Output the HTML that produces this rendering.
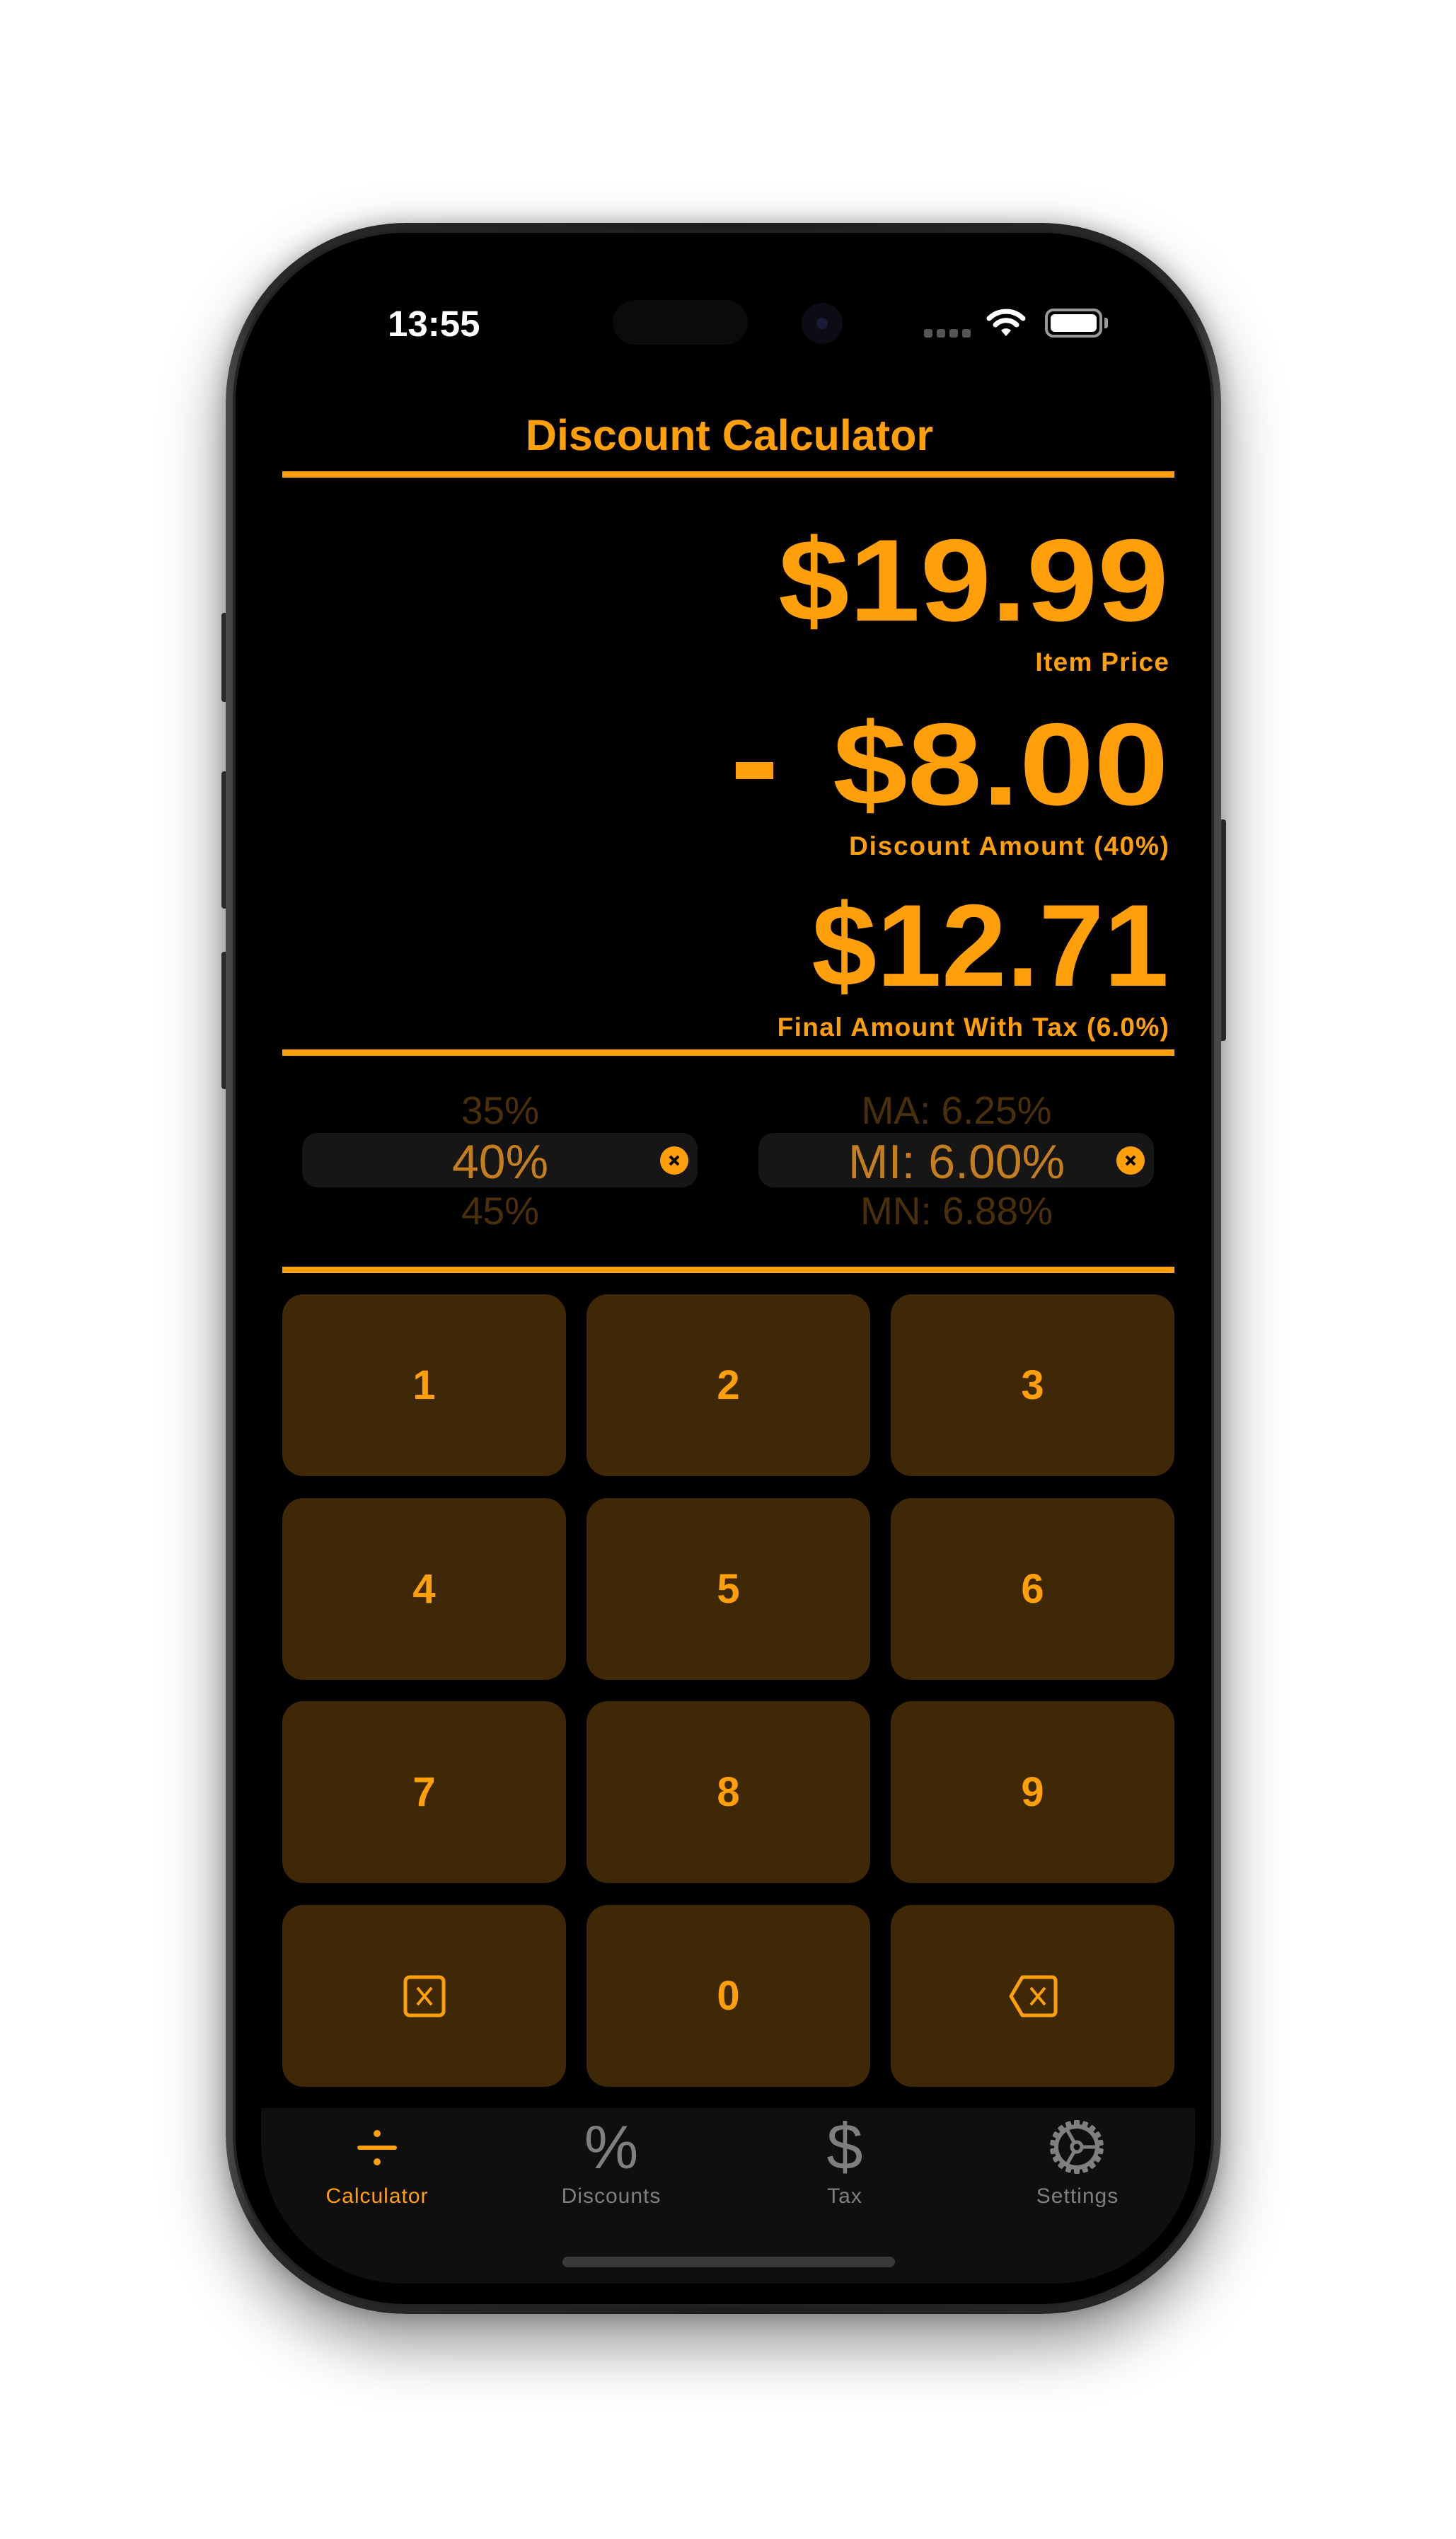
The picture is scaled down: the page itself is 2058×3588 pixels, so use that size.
<!DOCTYPE html>
<html><head><meta charset="utf-8"><style>
*{margin:0;padding:0;box-sizing:border-box}
html,body{width:2058px;height:3588px;background:#fff;overflow:hidden;font-family:"Liberation Sans",sans-serif}
.abs{position:absolute}
.phone{left:319px;top:315px;width:1407px;height:2955px;border-radius:255px;background:linear-gradient(90deg,#4a4a4a,#2a2a2a 3%,#1c1c1c 50%,#2a2a2a 97%,#4a4a4a);box-shadow:0 40px 90px rgba(0,0,0,.45),0 0 30px rgba(0,0,0,.25)}
.body{left:329px;top:325px;width:1387px;height:2935px;border-radius:245px;background:#000;border:4px solid #222}
.btn{background:#3a3a3a;border-radius:4px;width:12px}
.o{color:#ff9f0a;font-weight:bold;white-space:nowrap}
.r{right:406px;text-align:right}
.big{font-size:165px;line-height:165px;transform-origin:right center;display:block}
.lab{font-size:37px;line-height:37px;letter-spacing:1.3px;margin-right:-1.3px}
.line{left:399px;width:1261px;height:9px;background:#ff9f0a}
.pk{font-size:55px;line-height:55px;color:#4a300a;text-align:center;width:560px;white-space:nowrap}
.pill{background:#161616;border-radius:22px;height:77px;width:559px;top:1601px}
.sel{font-size:68px;line-height:68px;color:#c47e20;text-align:center;width:560px;white-space:nowrap}
.xc{width:40px;height:40px;border-radius:50%;background:#ff9f0a;top:1620px}
.key{width:401px;height:257px;background:#3f2805;border-radius:30px;display:flex;align-items:center;justify-content:center;color:#ff9f0a;font-weight:bold;font-size:58px}
.tl{font-size:30px;line-height:30px;top:3089px;width:300px;text-align:center;color:#7f7f7f;letter-spacing:1px}
</style></head><body>
<div class="abs btn" style="left:313px;top:866px;height:126px"></div>
<div class="abs btn" style="left:313px;top:1090px;height:194px"></div>
<div class="abs btn" style="left:313px;top:1345px;height:194px"></div>
<div class="abs btn" style="left:1721px;top:1158px;height:313px"></div>
<div class="abs phone"></div>
<div class="abs body"></div>

<div class="abs" style="left:548px;top:432px;font-size:51px;line-height:51px;color:#fff;font-weight:bold">13:55</div>
<div class="abs" style="left:866px;top:424px;width:191px;height:63px;border-radius:32px;background:#0b0b0b"></div>
<div class="abs" style="left:1133px;top:428px;width:58px;height:58px;border-radius:50%;background:#0c0c14"></div>
<div class="abs" style="left:1154px;top:449px;width:16px;height:16px;border-radius:50%;background:#1a1a3a"></div>
<div class="abs" style="left:1306px;top:465px;width:12px;height:12px;border-radius:3px;background:#555;box-shadow:18px 0 #555,36px 0 #555,54px 0 #555"></div>
<svg class="abs" style="left:1394px;top:434px" width="56" height="44" viewBox="0 0 56 44"><path d="M4 16 A34 34 0 0 1 52 16" stroke="#fff" stroke-width="7" fill="none" stroke-linecap="round"/><path d="M13 25 A21 21 0 0 1 43 25" stroke="#fff" stroke-width="7" fill="none" stroke-linecap="round"/><path d="M21 33 L28 41 L35 33 A10 10 0 0 0 21 33Z" fill="#fff"/></svg>
<div class="abs" style="left:1477px;top:436px;width:81px;height:41px;border:4px solid #999;border-radius:12px;padding:4px"><div style="width:100%;height:100%;background:#fff;border-radius:6px"></div></div>
<div class="abs" style="left:1561px;top:449px;width:5px;height:15px;background:#999;border-radius:0 3px 3px 0"></div>

<div class="abs o" style="left:0;width:2058px;text-align:center;top:585px;font-size:61px;line-height:61px;padding-left:4px">Discount Calculator</div>
<div class="abs line" style="top:666px"></div>

<div class="abs o r" style="top:738px"><span class="big" style="transform:scaleX(1.093)">$19.99</span></div>
<div class="abs o r lab" style="top:917px">Item Price</div>
<div class="abs" style="left:1040px;top:1077px;width:53px;height:24px;background:#ff9f0a"></div>
<div class="abs o r" style="top:998px"><span class="big" style="transform:scaleX(1.15)">$8.00</span></div>
<div class="abs o r lab" style="top:1177px;letter-spacing:1.8px;margin-right:-1.8px">Discount Amount (40%)</div>
<div class="abs o r" style="top:1254px"><span class="big">$12.71</span></div>
<div class="abs o r lab" style="top:1433px;letter-spacing:1.4px;margin-right:-1.4px">Final Amount With Tax (6.0%)</div>
<div class="abs line" style="top:1483px"></div>

<div class="abs pill" style="left:427px"></div>
<div class="abs pill" style="left:1072px"></div>
<div class="abs pk" style="left:427px;top:1542px">35%</div>
<div class="abs sel" style="left:427px;top:1608px">40%</div>
<div class="abs pk" style="left:427px;top:1684px">45%</div>
<div class="abs pk" style="left:1072px;top:1542px">MA: 6.25%</div>
<div class="abs sel" style="left:1072px;top:1608px">MI: 6.00%</div>
<div class="abs pk" style="left:1072px;top:1684px">MN: 6.88%</div>
<svg class="abs xc" style="left:933px" viewBox="0 0 40 40"><path d="M14 14L26 26M26 14L14 26" stroke="#000" stroke-width="4"/></svg>
<svg class="abs xc" style="left:1578px" viewBox="0 0 40 40"><path d="M14 14L26 26M26 14L14 26" stroke="#000" stroke-width="4"/></svg>
<div class="abs line" style="top:1790px"></div>

<div class="abs key" style="left:399px;top:1829px">1</div>
<div class="abs key" style="left:829px;top:1829px">2</div>
<div class="abs key" style="left:1259px;top:1829px">3</div>
<div class="abs key" style="left:399px;top:2117px">4</div>
<div class="abs key" style="left:829px;top:2117px">5</div>
<div class="abs key" style="left:1259px;top:2117px">6</div>
<div class="abs key" style="left:399px;top:2404px">7</div>
<div class="abs key" style="left:829px;top:2404px">8</div>
<div class="abs key" style="left:1259px;top:2404px">9</div>
<div class="abs key" style="left:399px;top:2692px"><svg width="60" height="60" viewBox="0 0 60 60"><rect x="3" y="3" width="54" height="54" rx="6" fill="none" stroke="#ff9f0a" stroke-width="5"/><path d="M20 18L40 42M40 18L20 42" stroke="#ff9f0a" stroke-width="4"/></svg></div>
<div class="abs key" style="left:829px;top:2692px">0</div>
<div class="abs key" style="left:1259px;top:2692px"><svg width="70" height="60" viewBox="0 0 70 60"><path d="M20 3H62a5 5 0 0 1 5 5V52a5 5 0 0 1-5 5H20L4 30Z" fill="none" stroke="#ff9f0a" stroke-width="5" stroke-linejoin="round"/><path d="M32 18L52 42M52 18L32 42" stroke="#ff9f0a" stroke-width="4"/></svg></div>

<div class="abs" style="left:369px;top:2979px;width:1320px;height:248px;background:#0f0f0f;border-radius:0 0 200px 200px"></div>
<svg class="abs" style="left:503px;top:3005px" width="60" height="60" viewBox="0 0 60 60"><circle cx="30" cy="10" r="5" fill="#ff9f0a"/><circle cx="30" cy="50" r="5" fill="#ff9f0a"/><rect x="2" y="27" width="56" height="6" rx="3" fill="#ff9f0a"/></svg>
<div class="abs" style="left:814px;top:2992px;width:100px;text-align:center;font-size:86px;line-height:86px;color:#7f7f7f">%</div>
<div class="abs" style="left:1144px;top:2988px;width:100px;text-align:center;font-size:92px;line-height:92px;color:#7f7f7f">$</div>
<svg class="abs" style="left:1484px;top:2996px" width="76" height="76" viewBox="0 0 76 76">
<g fill="#7f7f7f"><circle cx="38" cy="38" r="32"/>
<g id="t"><rect x="34" y="0" width="8" height="10" rx="2"/></g>
<use href="#t" transform="rotate(20 38 38)"/><use href="#t" transform="rotate(40 38 38)"/><use href="#t" transform="rotate(60 38 38)"/><use href="#t" transform="rotate(80 38 38)"/><use href="#t" transform="rotate(100 38 38)"/><use href="#t" transform="rotate(120 38 38)"/><use href="#t" transform="rotate(140 38 38)"/><use href="#t" transform="rotate(160 38 38)"/><use href="#t" transform="rotate(180 38 38)"/><use href="#t" transform="rotate(200 38 38)"/><use href="#t" transform="rotate(220 38 38)"/><use href="#t" transform="rotate(240 38 38)"/><use href="#t" transform="rotate(260 38 38)"/><use href="#t" transform="rotate(280 38 38)"/><use href="#t" transform="rotate(300 38 38)"/><use href="#t" transform="rotate(320 38 38)"/><use href="#t" transform="rotate(340 38 38)"/></g>
<circle cx="38" cy="38" r="26" fill="#0f0f0f"/>
<path d="M38 38L64 38M38 38L25 15M38 38L25 61" stroke="#7f7f7f" stroke-width="5"/>
<circle cx="38" cy="38" r="7" fill="#0f0f0f" stroke="#7f7f7f" stroke-width="5"/>
</svg>
<div class="abs tl" style="left:383px;color:#ff9f0a">Calculator</div>
<div class="abs tl" style="left:714px">Discounts</div>
<div class="abs tl" style="left:1044px">Tax</div>
<div class="abs tl" style="left:1373px">Settings</div>
<div class="abs" style="left:795px;top:3189px;width:470px;height:15px;border-radius:8px;background:#3a3a3a"></div>
</body></html>
